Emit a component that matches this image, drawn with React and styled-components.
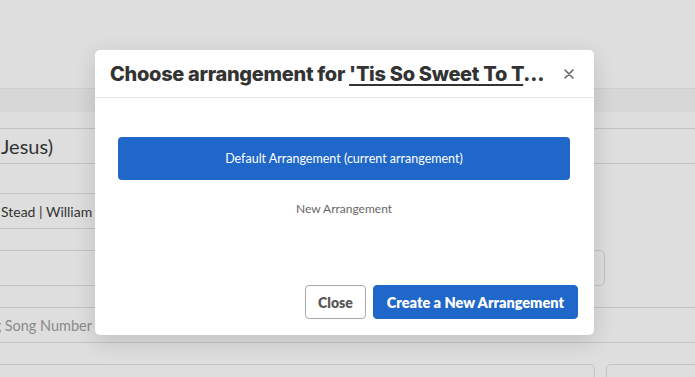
import React from "react";
import styled, { createGlobalStyle } from "styled-components";

const Global = createGlobalStyle`
  html, body { margin: 0; padding: 0; overflow: hidden; }
  body {
    width: 695px; height: 377px;
    background: #dedede;
    font-family: "Lato", "Open Sans", sans-serif;
    color: #333;
  }
`;

const Page = styled.div`
  position: relative;
  width: 695px;
  height: 377px;
  overflow: hidden;
`;

const TopArea = styled.div`
  height: 88px;
  background: #dedede;
`;

const Band = styled.div`
  height: 23px;
  border-top: 1px solid #cfcfcf;
  background: #d7d7d7;
`;

const Form = styled.div`
  display: flex;
  flex-direction: column;
  padding-top: 16px;
  margin-left: -100px;
  width: 1000px;
`;

const FieldRow = styled.div`
  display: flex;
  gap: 11px;
  margin-top: ${(p) => p.$gap || 0}px;
`;

const Field = styled.div`
  box-sizing: border-box;
  height: 36px;
  width: ${(p) => p.$w}px;
  border: 1px solid #c3c3c3;
  border-radius: 5px;
  display: flex;
  align-items: center;
  padding-left: ${(p) => p.$pad || 100}px;
  font-size: ${(p) => p.$size || 15}px;
  color: ${(p) => (p.$muted ? "#8a8a8a" : "#333")};
  white-space: nowrap;
  overflow: hidden;
`;

const Modal = styled.div`
  position: absolute;
  left: 95px;
  top: 50px;
  width: 499px;
  background: #fff;
  border-radius: 5px;
  box-shadow: 0 6px 22px rgba(0, 0, 0, 0.14);
  display: flex;
  flex-direction: column;
`;

const Header = styled.div`
  height: 48px;
  box-sizing: border-box;
  border-bottom: 1px solid #e6e6e6;
  display: flex;
  align-items: center;
  padding: 0 19px 0 15px;
  gap: 15px;
`;

const Title = styled.h2`
  flex: 1;
  min-width: 0;
  margin: 0;
  font-family: "Inter", "Lato", sans-serif;
  font-size: 20px;
  font-weight: 800;
  color: #333;
  white-space: nowrap;
  overflow: hidden;
  text-overflow: ellipsis;
  letter-spacing: -0.3px;
`;

const TitleLink = styled.a`
  color: #333;
  text-decoration: underline;
  text-underline-offset: 3px;
  text-decoration-thickness: 2px;
`;

const CloseX = styled.button`
  border: none;
  background: none;
  padding: 0;
  width: 12px;
  height: 12px;
  display: flex;
  align-items: center;
  justify-content: center;
  cursor: pointer;
`;

const Body = styled.div`
  padding: 39px 24px 55px 23px;
  display: flex;
  flex-direction: column;
  gap: 7px;
`;

const Option = styled.div`
  height: 43px;
  border-radius: 4px;
  display: flex;
  align-items: center;
  justify-content: center;
  font-size: ${(p) => (p.$active ? 12.5 : 12)}px;
  background: ${(p) => (p.$active ? "#1f67c9" : "transparent")};
  color: ${(p) => (p.$active ? "#fff" : "#666")};
`;

const Footer = styled.div`
  display: flex;
  justify-content: flex-end;
  gap: 7px;
  padding: 0 16px 16px;
`;

const Button = styled.button`
  height: 34px;
  box-sizing: border-box;
  border-radius: 4px;
  font-family: inherit;
  font-weight: 800;
  font-size: ${(p) => (p.$primary ? 14.5 : 14)}px;
  padding: 0 ${(p) => (p.$primary ? 13 : 12)}px;
  border: 1px solid ${(p) => (p.$primary ? "#1f67c9" : "#a9a9a9")};
  background: ${(p) => (p.$primary ? "#1f67c9" : "#fff")};
  color: ${(p) => (p.$primary ? "#fff" : "#5a5a5a")};
`;

export default function App() {
  return (
    <Page>
      <Global />
      <TopArea />
      <Band />
      <Form>
        <FieldRow>
          <Field $w={1000} $size={20}>Jesus)</Field>
        </FieldRow>
        <FieldRow $gap={29}>
          <Field $w={690} $size={14}>Stead | William J. Kirkpatrick</Field>
        </FieldRow>
        <FieldRow $gap={21}>
          <Field $w={705} />
        </FieldRow>
        <FieldRow $gap={21}>
          <Field $w={1000} $size={14.5} $muted $pad={50}>
            Existing Song Number
          </Field>
        </FieldRow>
        <FieldRow $gap={21}>
          <Field $w={695} />
          <Field $w={294} />
        </FieldRow>
      </Form>
      <Modal>
        <Header>
          <Title>
            Choose arrangement for{" "}
            <TitleLink href="#">'Tis So Sweet To Trust In Jesus</TitleLink>
          </Title>
          <CloseX aria-label="Close">
            <svg width="10" height="10" viewBox="0 0 10 10">
              <path d="M1 1L9 9M9 1L1 9" stroke="#666" strokeWidth="1.6" strokeLinecap="round" />
            </svg>
          </CloseX>
        </Header>
        <Body>
          <Option $active>Default Arrangement (current arrangement)</Option>
          <Option>New Arrangement</Option>
        </Body>
        <Footer>
          <Button>Close</Button>
          <Button $primary>Create a New Arrangement</Button>
        </Footer>
      </Modal>
    </Page>
  );
}
